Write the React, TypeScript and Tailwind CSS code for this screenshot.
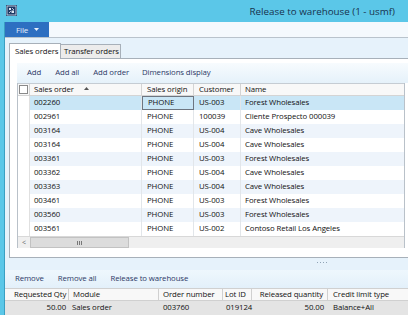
import React from "react";

const rows = [
  ["002260", "PHONE", "US-003", "Forest Wholesales"],
  ["002961", "PHONE", "100039", "Cliente Prospecto 000039"],
  ["003164", "PHONE", "US-004", "Cave Wholesales"],
  ["003164", "PHONE", "US-004", "Cave Wholesales"],
  ["003361", "PHONE", "US-003", "Forest Wholesales"],
  ["003362", "PHONE", "US-004", "Cave Wholesales"],
  ["003363", "PHONE", "US-004", "Cave Wholesales"],
  ["003461", "PHONE", "US-003", "Forest Wholesales"],
  ["003560", "PHONE", "US-003", "Forest Wholesales"],
  ["003561", "PHONE", "US-002", "Contoso Retail Los Angeles"],
];

function AppIcon() {
  return (
    <svg width="11" height="11" viewBox="0 0 11 11">
      <rect x="0" y="0" width="11" height="11" fill="#1d3a66" />
      <rect x="1" y="1" width="9" height="9" fill="none" stroke="#dfe8f2" strokeWidth="0.8" />
      <path d="M3 3 L5 3 L5 5 L3 5 Z" fill="#dfe8f2" />
      <path d="M5.5 5.5 L8 5.5 L8 8 L5.5 8 Z" fill="#dfe8f2" />
      <path d="M3 8 L5 6 M6 3 L8 5" stroke="#dfe8f2" strokeWidth="0.8" />
    </svg>
  );
}

export default function App() {
  return (
    <div className="w-[408px] h-[315px] overflow-hidden flex flex-col bg-[#e6f2fb] font-['Open_Sans',sans-serif] text-[7.8px] tracking-[-0.1px] leading-none text-[#111] font-medium">
      {/* Title bar */}
      <div className="h-[22px] shrink-0 bg-[#5bc7e8] flex items-start">
        <div className="ml-[6px] mt-[5px]">
          <AppIcon />
        </div>
        <div className="ml-auto mr-[13px] mt-[7px] text-[9.8px] tracking-normal font-normal text-[#17324e]">
          Release to warehouse (1 - usmf)
        </div>
      </div>

      <div className="flex flex-1 min-h-0">
        {/* left frame */}
        <div className="w-[5px] shrink-0 bg-[#5bc7e8] border-r border-[#3a9fc2]" />

        <div className="flex-1 min-w-0 flex flex-col">
          {/* Ribbon */}
          <div className="h-[16px] shrink-0 flex bg-[#f4f9fd] border-b border-[#b9c3cc]">
            <div className="w-[44px] h-[15px] bg-[#2d6fc1] flex items-center text-[#e8f0fb] text-[8px]">
              <span className="ml-[11px]">File</span>
              <svg className="ml-[6px]" width="5" height="3" viewBox="0 0 5 3">
                <path d="M0 0 L5 0 L2.5 3 Z" fill="#e8f0fb" />
              </svg>
            </div>
          </div>

          {/* Tabs */}
          <div className="pt-[5px] pl-[4px] shrink-0">
            <div className="flex items-end h-[15px]">
              <div className="relative z-10 w-[52px] h-[16px] -mb-px bg-white border border-b-0 border-[#a7b0b9] flex items-center">
                <span className="ml-[5px]">Sales orders</span>
              </div>
              <div className="w-[60px] h-[14px] bg-[#ececec] border border-l-0 border-b-0 border-[#a7b0b9] flex items-center">
                <span className="ml-[3px]">Transfer orders</span>
              </div>
            </div>
          </div>

          {/* Panel */}
          <div className="ml-[4px] h-[200px] shrink-0 bg-white border border-r-0 border-[#a7b0b9] pl-[7px] pt-[4px] flex flex-col">
            {/* action bar */}
            <div className="h-[20px] shrink-0 bg-gradient-to-b from-[#f7fbfe] to-[#e5f1fa] flex items-center gap-[14px] pl-[10px] text-[#2b3866]">
              <span>Add</span>
              <span>Add all</span>
              <span>Add order</span>
              <span className="-ml-[1px]">Dimensions display</span>
            </div>

            {/* grid */}
            <div className="w-[388px] border-l border-r border-[#b9c1c9] flex flex-col">
              {/* header */}
              <div className="h-[13px] flex bg-[#f8f8f8] border-b border-[#d4d4d4] border-t border-t-[#c5ccd3]">
                <div className="w-[12px] shrink-0 border-r border-[#d4d4d4] flex items-center justify-center">
                  <div className="w-[9px] h-[9px] bg-white border border-[#8a8a8a]" />
                </div>
                <div className="w-[112px] shrink-0 border-r border-[#d4d4d4] flex items-center pl-[4px]">
                  <span>Sales order</span>
                  <svg className="ml-[10px] mb-[2px]" width="5" height="3" viewBox="0 0 5 3">
                    <path d="M0 3 L5 3 L2.5 0 Z" fill="#555" />
                  </svg>
                </div>
                <div className="w-[52px] shrink-0 border-r border-[#d4d4d4] flex items-center pl-[5px]">Sales origin</div>
                <div className="w-[47px] shrink-0 border-r border-[#d4d4d4] flex items-center pl-[5px]">Customer</div>
                <div className="flex-1 flex items-center pl-[4px]">Name</div>
              </div>

              {/* rows */}
              {rows.map((r, i) => {
                const bg = i === 0 ? "bg-[#c9e6f6]" : i % 2 === 0 ? "bg-[#eef4fb]" : "bg-white";
                return (
                  <div key={i} className="h-[14px] flex">
                    <div className="w-[12px] shrink-0 bg-white border-r border-[#e0e0e0]" />
                    <div className={`flex-1 flex ${bg}`}>
                      <div className="w-[112px] shrink-0 border-r border-[#e2e6ea] flex items-center pl-[4px]">{r[0]}</div>
                      <div
                        className={`w-[52px] shrink-0 flex items-center pl-[5px] ${
                          i === 0 ? "border border-[#6d7580]" : "border-r border-[#e2e6ea]"
                        }`}
                      >
                        {r[1]}
                      </div>
                      <div className="w-[47px] shrink-0 border-r border-[#e2e6ea] flex items-center pl-[5px]">{r[2]}</div>
                      <div className="flex-1 flex items-center pl-[4px]">{r[3]}</div>
                    </div>
                  </div>
                );
              })}

              {/* horizontal scrollbar */}
              <div className="h-[12px] flex bg-[#efefef] border-t border-[#d8d8d8]">
                <div className="w-[12px] shrink-0 flex items-center justify-center text-[#666] text-[7px]">
                  &lt;
                </div>
                <div className="w-[99px] shrink-0 bg-[#dcdcdc] border border-[#c2c2c2] flex items-center justify-center gap-[1px]">
                  <div className="w-px h-[4px] bg-[#777]" />
                  <div className="w-px h-[4px] bg-[#777]" />
                  <div className="w-px h-[4px] bg-[#777]" />
                </div>
                <div className="flex-1" />
              </div>
            </div>
          </div>

          {/* splitter */}
          <div className="h-[12px] shrink-0 relative">
            <div className="absolute left-[312px] top-[4px] flex gap-[2px]">
              <div className="w-px h-px bg-[#8fa3b5]" />
              <div className="w-px h-px bg-[#8fa3b5]" />
              <div className="w-px h-px bg-[#8fa3b5]" />
              <div className="w-px h-px bg-[#8fa3b5]" />
            </div>
          </div>

          {/* bottom action bar */}
          <div className="h-[18px] shrink-0 bg-gradient-to-b from-[#eef7fd] to-[#e3f0fa] flex items-center gap-[14px] pl-[10px] text-[#2b3866]">
            <span>Remove</span>
            <span>Remove all</span>
            <span>Release to warehouse</span>
          </div>

          {/* bottom grid header */}
          <div className="h-[13px] shrink-0 flex bg-[#f8f8f8] border-t border-b border-[#d0d0d0]">
            <div className="w-[64px] shrink-0 border-r border-[#d0d0d0] flex items-center pl-[9px]">Requested Qty</div>
            <div className="w-[90px] shrink-0 border-r border-[#d0d0d0] flex items-center pl-[4px]">Module</div>
            <div className="w-[64px] shrink-0 border-r border-[#d0d0d0] flex items-center pl-[4px]">Order number</div>
            <div className="w-[29px] shrink-0 border-r border-[#d0d0d0] flex items-center pl-[2px]">Lot ID</div>
            <div className="w-[76px] shrink-0 border-r border-[#d0d0d0] flex items-center justify-end pr-[4px]">Released quantity</div>
            <div className="flex-1 flex items-center pl-[5px]">Credit limit type</div>
          </div>
          {/* bottom grid row */}
          <div className="h-[14px] shrink-0 flex bg-[#e4e4e4]">
            <div className="w-[64px] shrink-0 flex items-center justify-end pr-[3px]">50.00</div>
            <div className="w-[90px] shrink-0 flex items-center pl-[3px]">Sales order</div>
            <div className="w-[64px] shrink-0 flex items-center pl-[4px]">003760</div>
            <div className="w-[29px] shrink-0 flex items-center pl-[3px]">019124</div>
            <div className="w-[76px] shrink-0 flex items-center justify-end pr-[4px]">50.00</div>
            <div className="flex-1 flex items-center pl-[5px]">Balance+All</div>
          </div>
        </div>
      </div>
    </div>
  );
}
